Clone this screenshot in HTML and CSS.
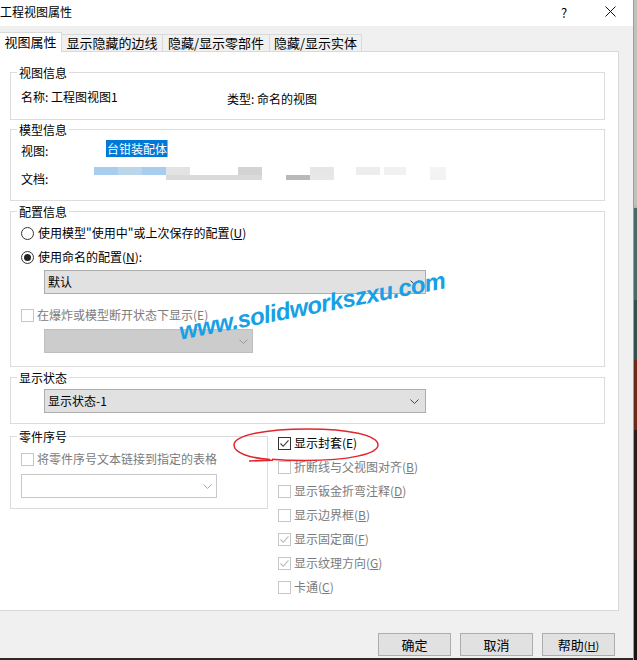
FILE: index.html
```html
<!DOCTYPE html>
<html lang="zh-CN">
<head>
  <meta charset="UTF-8">
  <meta name="viewport" content="width=device-width, initial-scale=1.0">
  <title>工程视图属性</title>
  <link rel="stylesheet" href="styles.css">
</head>
<body>
  <div class="dialog">
    <div class="titlebar">
      <span class="title">工程视图属性</span>
      <span class="help-btn">?</span>
      <span class="close-btn">
        <svg width="11" height="11" viewBox="0 0 11 11"><path d="M0.5 0.5 L10.5 10.5 M10.5 0.5 L0.5 10.5" stroke="#111" stroke-width="1"/></svg>
      </span>
    </div>

    <div class="tabs">
      <div class="tab active">视图属性</div>
      <div class="tab tab-edges">显示隐藏的边线</div>
      <div class="tab tab-parts">隐藏/显示零部件</div>
      <div class="tab tab-bodies">隐藏/显示实体</div>
    </div>

    <div class="panel">
      <div class="group group-view">
        <div class="group-title">视图信息</div>
        <div class="info-row">
          <span class="info-name">名称: 工程图视图1</span>
          <span class="info-type">类型: 命名的视图</span>
        </div>
      </div>

      <div class="group group-model">
        <div class="group-title">模型信息</div>
        <div class="model-row">
          <span class="model-label">视图:</span>
          <span class="model-selected">台钳装配体</span>
        </div>
        <div class="doc-row">
          <span class="doc-label">文档:</span>
          <span class="doc-blur"></span>
        </div>
      </div>

      <div class="group group-config">
        <div class="group-title">配置信息</div>
        <div class="option option-first">
          <span class="radio"></span>
          <span>使用模型"使用中"或上次保存的配置(<u>U</u>)</span>
        </div>
        <div class="option option-second">
          <span class="radio checked"></span>
          <span>使用命名的配置(<u>N</u>):</span>
        </div>
        <div class="select select-config">
          <span>默认</span>
          <svg class="chevron" width="9" height="5" viewBox="0 0 9 5"><polyline points="0.5,0.5 4.5,4.5 8.5,0.5" fill="none" stroke="#444"/></svg>
        </div>
        <div class="option option-exploded disabled">
          <span class="cb"></span>
          <span>在爆炸或模型断开状态下显示(E)</span>
        </div>
        <div class="select select-exploded disabled">
          <span></span>
          <svg class="chevron" width="9" height="5" viewBox="0 0 9 5"><polyline points="0.5,0.5 4.5,4.5 8.5,0.5" fill="none" stroke="#9a9a9a"/></svg>
        </div>
      </div>

      <div class="group group-state">
        <div class="group-title">显示状态</div>
        <div class="select select-state">
          <span>显示状态-1</span>
          <svg class="chevron" width="9" height="5" viewBox="0 0 9 5"><polyline points="0.5,0.5 4.5,4.5 8.5,0.5" fill="none" stroke="#444"/></svg>
        </div>
      </div>

      <div class="lower">
        <div class="group group-balloon">
          <div class="group-title">零件序号</div>
          <div class="option option-balloon disabled">
            <span class="cb"></span>
            <span>将零件序号文本链接到指定的表格</span>
          </div>
          <div class="select select-balloon disabled">
            <span></span>
            <svg class="chevron" width="9" height="5" viewBox="0 0 9 5"><polyline points="0.5,0.5 4.5,4.5 8.5,0.5" fill="none" stroke="#a8a8a8"/></svg>
          </div>
        </div>

        <div class="options">
          <div class="check-row">
            <span class="cb"><svg width="11" height="11" viewBox="0 0 11 11"><path d="M1.5 5.5 L4.2 8.3 L9.5 2.3" fill="none" stroke="#333" stroke-width="1.1"/></svg></span>
            <span>显示封套(E)</span>
          </div>
          <div class="check-row disabled">
            <span class="cb"></span>
            <span>折断线与父视图对齐(<u>B</u>)</span>
          </div>
          <div class="check-row disabled">
            <span class="cb"></span>
            <span>显示钣金折弯注释(<u>D</u>)</span>
          </div>
          <div class="check-row disabled">
            <span class="cb"></span>
            <span>显示边界框(<u>B</u>)</span>
          </div>
          <div class="check-row disabled">
            <span class="cb"><svg width="11" height="11" viewBox="0 0 11 11"><path d="M1.5 5.5 L4.2 8.3 L9.5 2.3" fill="none" stroke="#b8b8b8" stroke-width="1.1"/></svg></span>
            <span>显示固定面(<u>F</u>)</span>
          </div>
          <div class="check-row disabled">
            <span class="cb"><svg width="11" height="11" viewBox="0 0 11 11"><path d="M1.5 5.5 L4.2 8.3 L9.5 2.3" fill="none" stroke="#b8b8b8" stroke-width="1.1"/></svg></span>
            <span>显示纹理方向(<u>G</u>)</span>
          </div>
          <div class="check-row disabled">
            <span class="cb"></span>
            <span>卡通(<u>C</u>)</span>
          </div>
        </div>
      </div>

      <!-- overlays: watermark and the red marker loop -->
      <div class="watermark">www.solidworkszxu.com</div>
      <svg class="marker" width="152" height="42" viewBox="0 0 152 42">
        <path d="M40 34.5 C20 33 4 28 4 20 C4 10 36 4 78 4 C118 4 148 10 148 20 C148 29 118 35.5 76 35.5 C62 35.5 50 35 42 34.3" fill="none" stroke="#e2262d" stroke-width="1.5"/>
        <path d="M19 36 L43 35.3" fill="none" stroke="#e2262d" stroke-width="1.6"/>
      </svg>
    </div>

    <div class="buttons">
      <button class="btn">确定</button>
      <button class="btn">取消</button>
      <button class="btn">帮助<span class="btn-key">(<u>H</u>)</span></button>
    </div>
  </div>
  <div class="desktop-edge"></div>
</body>
</html>
```

FILE: styles.css
```css
body {
  margin: 0;
  width: 637px;
  height: 660px;
  display: flex;
  align-items: flex-start;
  background-color: #2e2a27;
  font-family: "Noto Sans CJK SC", sans-serif;
  font-size: 12px;
  color: #000;
  overflow: hidden;
}
.dialog {
  width: 633px;
  height: 658px;
  background-color: #f0f0f0;
  display: flex;
  flex-direction: column;
}
.desktop-edge {
  width: 4px;
  height: 660px;
  border-left: 1px solid #9d9d9d;
  box-sizing: border-box;
  background: linear-gradient(to bottom, #c3c0b8 0 205px, #bdb9ae 205px 208px, #4b6867 208px 300px, #33504f 300px 360px, #6b2a18 360px 430px, #2c1d17 430px 560px, #1c1410 560px);
}

/* title bar */
.titlebar {
  height: 26px;
  background-color: #fff;
  display: flex;
  align-items: center;
}
.title {
  line-height: 16px;
  margin-top: -2px;
}
.help-btn {
  margin-left: auto;
  width: 46px;
  text-align: center;
  font-size: 13px;
  margin-top: -2px;
}
.close-btn {
  width: 46px;
  display: flex;
  justify-content: center;
  margin-top: -3px;
}

/* tabs */
.tabs {
  height: 25px;
  display: flex;
  align-items: flex-end;
}
.tab {
  height: 17px;
  box-sizing: border-box;
  border: 1px solid #d9d9d9;
  border-bottom: none;
  margin-left: -1px;
  font-size: 13px;
  line-height: 16px;
  text-align: center;
  background-color: #f0f0f0;
}
.tab.active {
  width: 62px;
  height: 20px;
  margin-left: 0;
  margin-bottom: -1px;
  border-left: none;
  background-color: #fff;
  line-height: 18px;
  position: relative;
  z-index: 1;
}
.tab-edges { width: 102px; }
.tab-parts { width: 108px; }
.tab-bodies { width: 93px; }

/* page panel */
.panel {
  width: 619px;
  height: 560px;
  box-sizing: border-box;
  background-color: #fff;
  border-top: 1px solid #d9d9d9;
  border-right: 1px solid #d9d9d9;
  border-bottom: 1px solid #d9d9d9;
  position: relative;
  overflow: hidden;
}
.group {
  width: 595px;
  box-sizing: border-box;
  margin-left: 10px;
  padding-left: 10px;
  border: 1px solid #dcdcdc;
}
.group-title {
  display: table;
  margin: -8px 0 0 -4px;
  padding: 0 2px;
  line-height: 16px;
  background-color: #fff;
}

.group-view {
  height: 48px;
  margin-top: 20px;
}
.info-row {
  display: flex;
  align-items: flex-start;
  margin-top: 8px;
  line-height: 16px;
}
.info-name { width: 206px; }
.info-type { margin-top: 2px; }

.group-model {
  height: 72px;
  margin-top: 9px;
}
.model-row {
  display: flex;
  align-items: flex-start;
  margin-top: 2px;
}
.model-label {
  width: 85px;
  padding-top: 3px;
  line-height: 16px;
}
.model-selected {
  line-height: 17px;
  padding-left: 1px;
  background-color: #0078d7;
  color: #fff;
  border-right: 1px solid #f39a4a;
}
.doc-row {
  display: flex;
  align-items: flex-start;
  margin-top: 8px;
}
.doc-label {
  width: 73px;
  padding-top: 4px;
  line-height: 16px;
}
.doc-blur {
  width: 352px;
  height: 13px;
  background:
    linear-gradient(to right, #a8cdee 0 24px, #bcd5ea 24px 48px, #a8cdee 48px 72px, #e3e3e3 72px 96px, transparent 96px 144px, #d3d3d3 144px 168px, transparent 168px 216px, #e6e6e6 216px 240px, transparent 240px 262px, #ededed 262px 286px, transparent 286px 290px, #f1f1f1 290px 312px, transparent 312px 336px, #f4f4f4 336px 352px) left top / 100% 8px no-repeat,
    linear-gradient(to right, transparent 0 72px, #dadada 72px 168px, transparent 168px 192px, #b9b9b9 192px 216px, #e8e8e8 216px 240px, transparent 240px 336px, #f2f2f2 336px 352px) left bottom / 100% 5px no-repeat;
}

.group-config {
  height: 156px;
  margin-top: 10px;
}
.option {
  display: flex;
  align-items: center;
  gap: 3px;
  line-height: 18px;
}
.option-first { margin-top: 4px; }
.option-second { margin-top: 6px; }
.option-exploded { margin-top: 12px; }
.option-balloon { margin-top: 5px; }

.radio {
  width: 13px;
  height: 13px;
  box-sizing: border-box;
  border: 1px solid #333;
  border-radius: 50%;
  display: flex;
  align-items: center;
  justify-content: center;
  margin-right: 1px;
}
.radio.checked::after {
  content: "";
  width: 7px;
  height: 7px;
  border-radius: 50%;
  background-color: #222;
}
.cb {
  width: 13px;
  height: 13px;
  box-sizing: border-box;
  border: 1px solid #333;
  background-color: #fff;
  display: flex;
  align-items: center;
  justify-content: center;
}
.disabled {
  color: #7b7b7b;
}
.disabled .cb {
  border-color: #c6c6c6;
}

.select {
  height: 24px;
  box-sizing: border-box;
  border: 1px solid #adadad;
  background-color: #e1e1e1;
  display: flex;
  align-items: center;
  justify-content: space-between;
  padding: 0 6px 0 3px;
  line-height: 16px;
}
.select-config {
  width: 382px;
  margin: 4px 0 0 23px;
}
.select-exploded {
  width: 209px;
  margin: 5px 0 0 23px;
  background-color: #cccccc;
  border-color: #bfbfbf;
  padding-right: 4px;
}
.group-state {
  height: 47px;
  margin-top: 10px;
}
.select-state {
  width: 382px;
  margin: 3px 0 0 23px;
}

.lower {
  display: flex;
  align-items: flex-start;
  margin-top: 7px;
}
.group-balloon {
  width: 258px;
  height: 73px;
  margin-top: 5px;
}
.select-balloon {
  width: 196px;
  margin-top: 6px;
  background-color: #fff;
  border-color: #c8c8c8;
  padding-right: 4px;
}
.options {
  margin-left: 10px;
}
.check-row {
  display: flex;
  align-items: center;
  gap: 3px;
  height: 24px;
  line-height: 16px;
}

.watermark {
  position: absolute;
  left: 312px;
  top: 254px;
  transform: translate(-50%, -50%) rotate(-11deg);
  font: italic bold 24px "Liberation Sans", sans-serif;
  letter-spacing: -0.6px;
  color: #17a0e4;
  white-space: nowrap;
  pointer-events: none;
}
.marker {
  position: absolute;
  left: 230px;
  top: 373px;
}

/* bottom buttons */
.buttons {
  display: flex;
  justify-content: flex-end;
  gap: 9px;
  padding: 22px 18px 0 0;
}
.btn {
  width: 73px;
  height: 23px;
  box-sizing: border-box;
  padding: 0;
  border: 1px solid #adadad;
  background-color: #e1e1e1;
  font-family: "Noto Sans CJK SC", sans-serif;
  font-size: 13px;
  line-height: 16px;
  color: #000;
}
.btn-key {
  font-size: 11px;
}
```
